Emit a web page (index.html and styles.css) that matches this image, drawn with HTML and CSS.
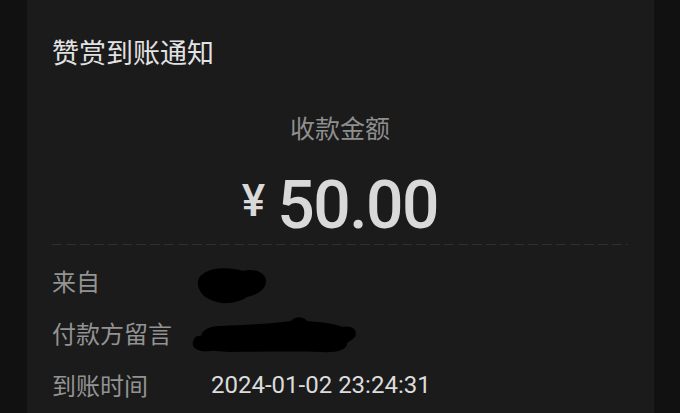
FILE: index.html
```html
<!DOCTYPE html>
<html lang="zh-CN">
<head>
<meta charset="utf-8">
<title>赞赏到账通知</title>
<link rel="stylesheet" href="styles.css">
</head>
<body>
<div class="card">
  <div class="title">赞赏到账通知</div>
  <div class="amount-label">收款金额</div>
  <div class="amount"><span class="yen">¥</span><span class="num">50.00</span></div>
  <div class="divider"></div>
  <div class="rows">
    <div class="row">
      <div class="label">来自</div>
      <div class="value">
        <svg class="scribble s1" width="70" height="37" viewBox="0 0 70 37"><path d="M6 7 C14 0 34 0 46 4 C56 1 68 5 69 13 C70 22 60 28 50 30 C40 37 24 38 14 33 C4 29 0 21 1 14 C2 10 4 8 6 7 Z" fill="#000"/></svg>
      </div>
    </div>
    <div class="row">
      <div class="label">付款方留言</div>
      <div class="value">
        <svg class="scribble s2" width="166" height="37" viewBox="0 0 166 37"><path d="M10 20 C12 12 22 10 30 10 C50 9 80 8 100 5 C104 0 112 0 116 5 C130 6 145 8 152 11 C162 9 167 15 164 21 C160 25 156 26 156 28 C155 34 146 37 130 36 C100 35 70 36 40 36 C30 36 24 34 20 35 C8 37 0 32 2 26 C3 21 6 19 10 20 Z" fill="#000"/></svg>
      </div>
    </div>
    <div class="row">
      <div class="label">到账时间</div>
      <div class="value time">2024-01-02 23:24:31</div>
    </div>
  </div>
</div>
</body>
</html>
```
FILE: styles.css
```css
html, body {
  margin: 0;
  padding: 0;
  background: #111111;
  height: 100%;
  overflow: hidden;
}
body {
  font-family: Roboto, "Noto Sans CJK SC", sans-serif;
}
.card {
  margin-left: 27px;
  width: 627px;
  box-sizing: border-box;
  min-height: 413px;
  background: #1b1b1b;
  padding: 38px 26px 0 25px;
}
.title {
  font-family: "Noto Sans CJK SC", sans-serif;
  font-size: 27px;
  line-height: 27px;
  color: #e2e2e2;
}
.amount-label {
  margin-top: 50px;
  text-align: center;
  font-family: "Noto Sans CJK SC", sans-serif;
  font-size: 25px;
  line-height: 25px;
  color: #8f8f8f;
}
.amount {
  margin-top: 33px;
  display: flex;
  justify-content: center;
  align-items: baseline;
  color: #d9d9d9;
  height: 66px;
}
.yen {
  font-family: Roboto, sans-serif;
  font-weight: 500;
  font-size: 44px;
  line-height: 66px;
  margin-right: 12px;
  position: relative;
  top: -12px;
}
.num {
  font-family: Roboto, sans-serif;
  font-weight: 500;
  font-size: 66px;
  line-height: 66px;
  letter-spacing: -1.5px;
}
.divider {
  margin-top: 5px;
  height: 1px;
  background: repeating-linear-gradient(to right, #2f2f2f 0 10px, transparent 10px 14px);
}
.rows {
  margin-top: 24px;
  display: flex;
  flex-direction: column;
  gap: 28px;
}
.row {
  display: flex;
  height: 24px;
  align-items: center;
}
.label {
  width: 159px;
  flex: none;
  font-family: "Noto Sans CJK SC", sans-serif;
  font-size: 24px;
  line-height: 24px;
  color: #939393;
}
.value {
  position: relative;
  flex: 1;
  height: 24px;
  font-size: 24px;
  line-height: 24px;
  color: #dcdcdc;
}
.time {
  font-family: Roboto, sans-serif;
}
.scribble {
  position: absolute;
  display: block;
}
.s1 {
  left: -14px;
  top: -2px;
}
.s2 {
  left: -20px;
  top: -5px;
}
```
